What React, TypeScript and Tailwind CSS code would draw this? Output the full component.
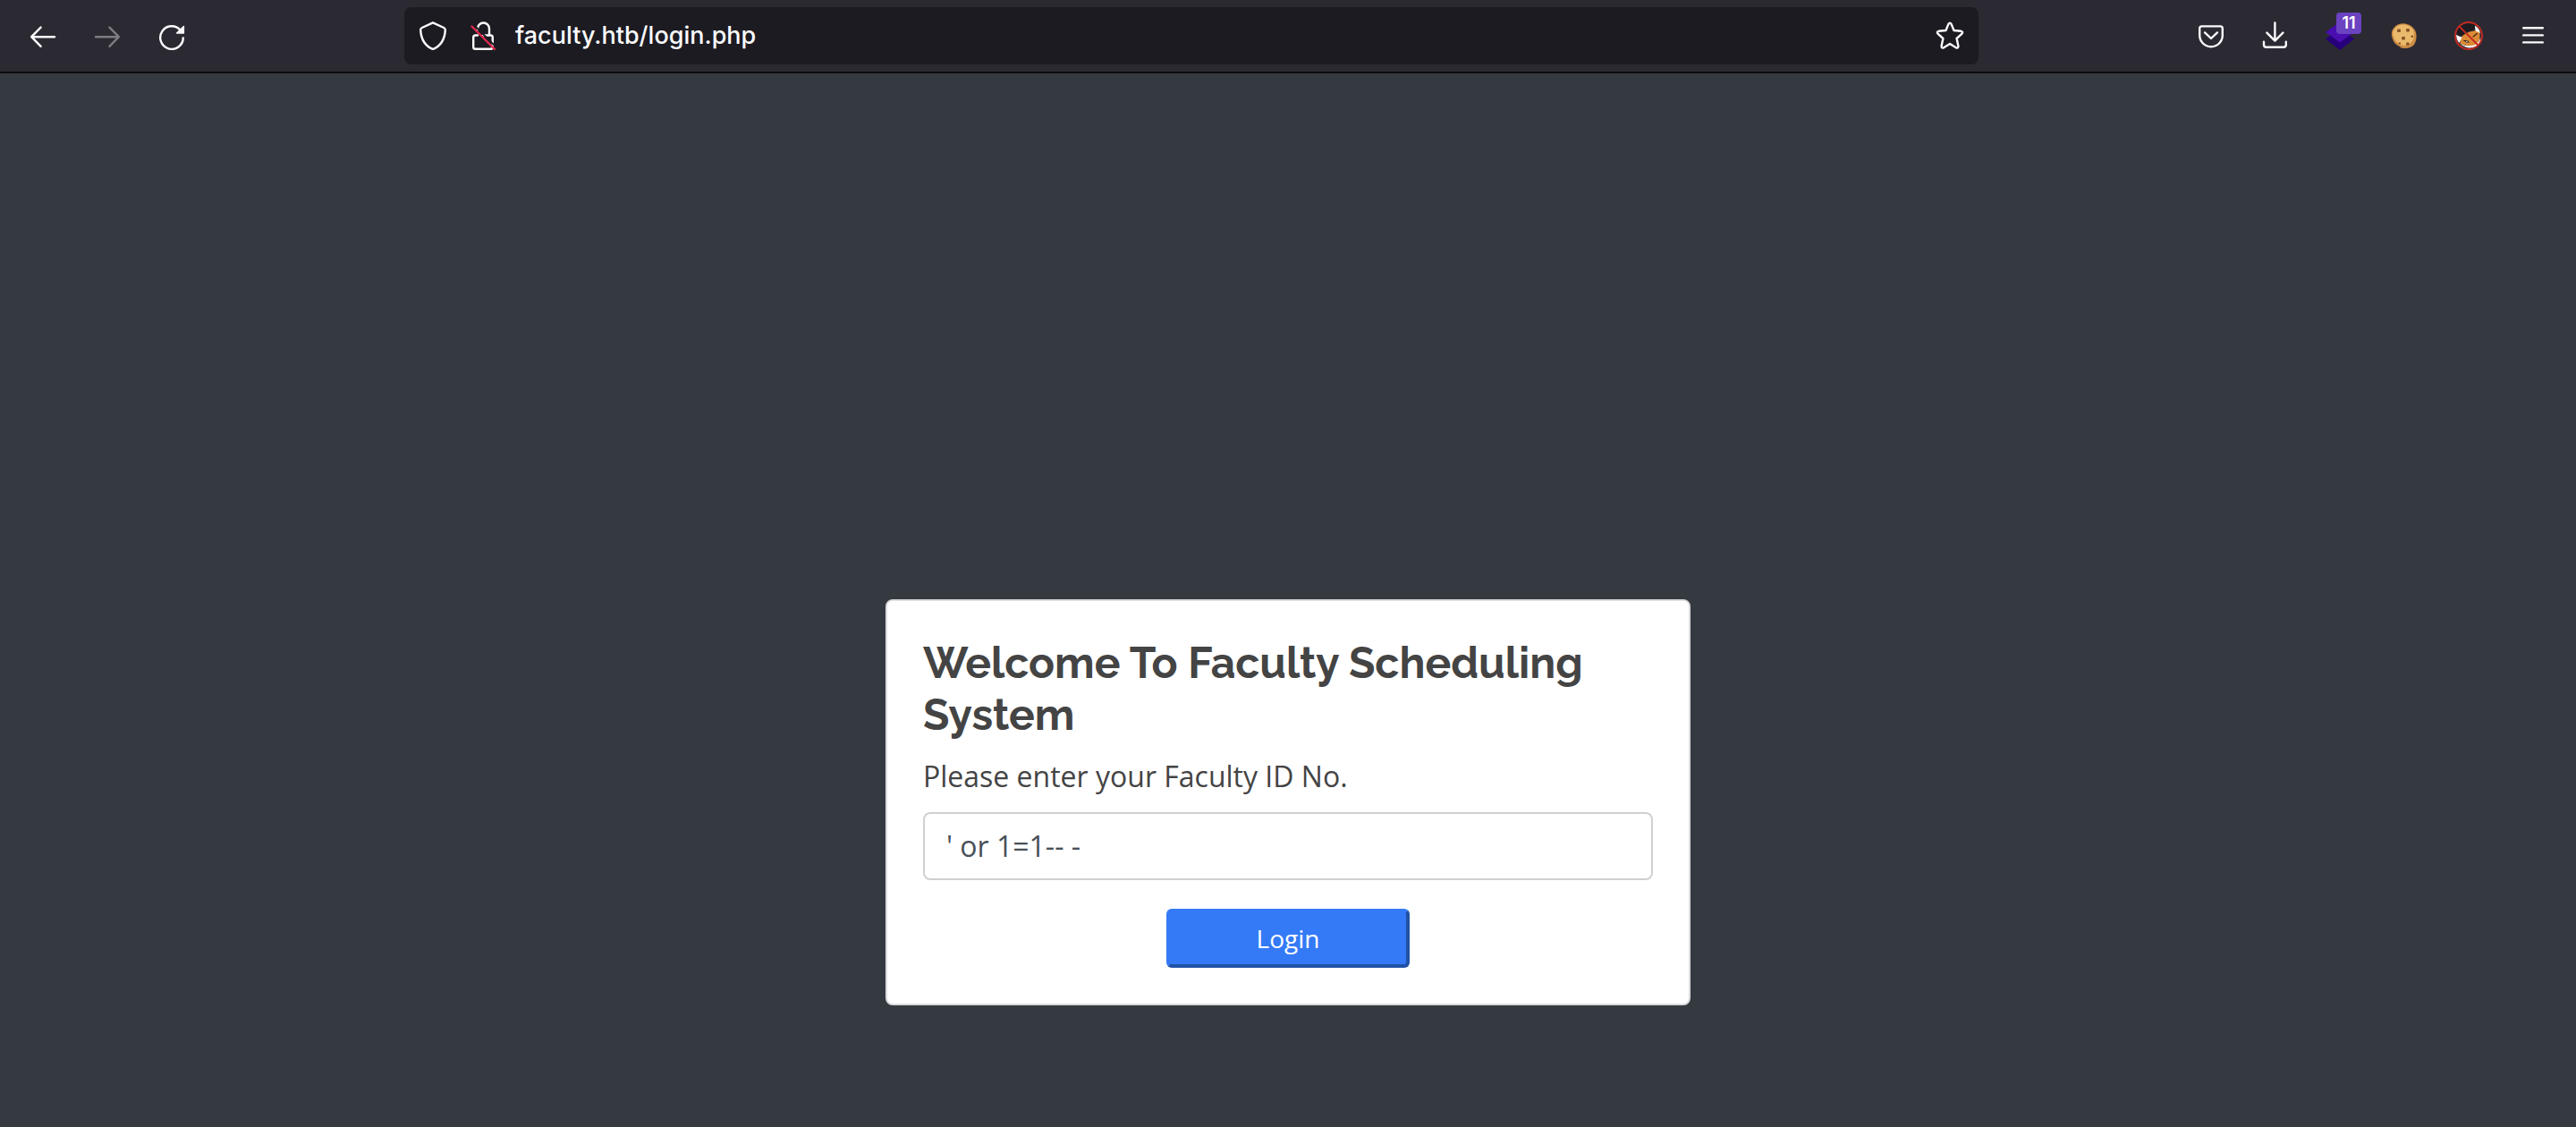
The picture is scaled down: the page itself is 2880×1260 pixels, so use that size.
import { useState, type ReactNode } from 'react';

function Icon({ children }: { children: ReactNode }) {
  return (
    <svg
      aria-hidden="true"
      viewBox="0 0 32 32"
      className="size-8 shrink-0"
      fill="none"
      stroke="currentColor"
      strokeWidth="2.4"
      strokeLinecap="round"
      strokeLinejoin="round"
    >
      {children}
    </svg>
  );
}

function ToolbarButton({
  label,
  disabled,
  children,
}: {
  label: string;
  disabled?: boolean;
  children: ReactNode;
}) {
  return (
    <button
      type="button"
      aria-label={label}
      disabled={disabled}
      className="relative flex h-16 w-[72px] items-center justify-center rounded-lg text-[#fbfbfe] disabled:text-[#7d7c82]"
    >
      {children}
    </button>
  );
}

function AddressBar() {
  const [url, setUrl] = useState('faculty.htb/login.php');
  return (
    <div className="flex h-16 min-w-0 flex-1 items-center rounded-lg bg-[#1c1b22] px-4 text-[#fbfbfe]">
      <button type="button" aria-label="Tracking protection">
        <Icon>
          <path d="M16 1.4 L28.2 7 Q29.9 7.8 29.8 9.6 C29.3 19.5 25.5 27 16 31 C6.5 27 2.7 19.5 2.2 9.6 Q2.1 7.8 3.8 7 Z" />
        </Icon>
      </button>
      <button type="button" aria-label="Connection not secure" className="ml-6">
        <Icon>
          <path d="M10 9 V8 A6.5 6.5 0 0 1 23 8 V15.5 M10 15.5 H7.5 Q5.2 15.5 5.2 17.8 V28.5 Q5.2 30.8 7.5 30.8 H24.5 Q26.8 30.8 26.8 28.5 V17.8 Q26.8 15.5 24.5 15.5 H16" />
          <path d="M5.5 3.5 L31 29" stroke="#1c1b22" strokeWidth="2" strokeLinecap="butt" />
          <path d="M3.5 5.5 L29 31" stroke="#e22850" />
        </Icon>
      </button>
      <input
        aria-label="Address"
        value={url}
        onChange={(e) => setUrl(e.target.value)}
        className="ml-5 min-w-0 flex-1 bg-transparent font-[Inter,sans-serif] text-[27px] leading-10 font-medium outline-none"
      />
      <button type="button" aria-label="Bookmark this page">
        <Icon>
          <path d="M14.4 2.9 Q16 0.6 17.6 2.9 L20.5 10 L28.4 10.8 Q31.3 11.5 29.3 13.9 L23.6 19 L25.4 27.4 Q25.6 30.3 22.9 29.3 L16 25 L9.1 29.3 Q6.4 30.3 6.6 27.4 L8.4 19 L2.7 13.9 Q0.7 11.5 3.6 10.8 L11.5 10 Z" />
        </Icon>
      </button>
    </div>
  );
}

function Toolbar() {
  return (
    <header className="flex items-center border-b-2 border-[#0c0c0d] bg-[#2b2a33] px-3 py-2">
      <nav aria-label="History" className="flex">
        <ToolbarButton label="Back">
          <Icon>
            <path d="M13.6 6.6 L3.2 17.2 L13.6 27.8 M3.2 17.2 H29" />
          </Icon>
        </ToolbarButton>
        <ToolbarButton label="Forward" disabled>
          <Icon>
            <path d="M18.4 6.6 L28.8 17.2 L18.4 27.8 M28.8 17.2 H3" />
          </Icon>
        </ToolbarButton>
        <ToolbarButton label="Reload">
          <Icon>
            <path d="M28.8 18.4 A12.8 12.8 0 1 1 25.6 9.6" />
            <path d="M29.4 5.6 V13 H21.6 Z" fill="currentColor" strokeWidth="1.4" />
          </Icon>
        </ToolbarButton>
      </nav>
      <div className="flex min-w-0 flex-1 px-56">
        <AddressBar />
      </div>
      <div className="flex">
        <ToolbarButton label="Save to Pocket">
          <Icon>
            <path d="M5.6 5.4 H26.4 Q28.8 5.4 28.8 7.8 V15.6 A12.8 12.6 0 0 1 3.2 15.6 V7.8 Q3.2 5.4 5.6 5.4 Z" />
            <path d="M9 12.4 L16 19 L23 12.4" />
          </Icon>
        </ToolbarButton>
        <ToolbarButton label="Downloads">
          <Icon>
            <path d="M15.4 1.4 V21 M6.4 12.6 L15.4 21.6 L24.4 12.6" />
            <path d="M3 22.8 V26 Q3 28.8 5.8 28.8 H25 Q27.8 28.8 27.8 26 V22.8" />
          </Icon>
        </ToolbarButton>
        <ToolbarButton label="Web technologies, 11 found">
          <Icon>
            <path d="M16 8 L32 19.5 L16 32 L0 19.5 Z" fill="#26007a" stroke="none" />
            <path d="M16 0.5 L32 12 L16 23.5 L0 12 Z" fill="#4a0db0" stroke="none" />
          </Icon>
          <span className="absolute top-1.5 right-3 flex h-6 w-7 items-center justify-center rounded-sm bg-[#6b42bf] font-[Inter,sans-serif] text-[18px] leading-6 font-semibold text-white">
            11
          </span>
        </ToolbarButton>
        <ToolbarButton label="Cookie editor">
          <Icon>
            <path
              d="M10 3 Q16 1 22 4 Q29 8 29.5 15 Q30 21 27 26 Q23 30 17 30 Q13 30.5 10 27.5 Q4 25 2.5 18 Q0.5 12 4 7.5 Q6 4 10 3 Z"
              fill="#cf8d45"
              stroke="none"
            />
            <path
              d="M11 4 Q17 2.5 21 5 Q26.5 8 27 14 Q27 20 23.5 24 Q19 28 13.5 26.5 Q6 24 4 17 Q2 12 5.5 8 Q7.5 5 11 4 Z"
              fill="#eab96c"
              stroke="none"
            />
            <g fill="#8a5527" stroke="none">
              <rect x="8" y="8.5" width="4" height="3.6" rx="1" />
              <rect x="18" y="8" width="4" height="3.4" rx="1" />
              <rect x="13" y="17" width="4" height="3.6" rx="1" />
              <rect x="23.5" y="15.5" width="2.6" height="2.6" rx="1" />
              <rect x="18" y="23.5" width="3.6" height="3.2" rx="1" />
              <rect x="9.5" y="23.5" width="2.6" height="2" rx="1" />
            </g>
          </Icon>
        </ToolbarButton>
        <ToolbarButton label="FoxyProxy, disabled">
          <Icon>
            <path
              d="M5 6.5 Q10 1.8 16.5 2 Q22 2.4 24 5 L22 9.5 L14 12 L7.5 17 L3 14 Q3 9 5 6.5 Z"
              fill="#1d1b20"
              stroke="none"
            />
            <path
              d="M7 18 Q13 11.5 22 10.5 L27 9.5 Q29.5 14 28 20 Q26.5 25.5 22 27.5 Q14 27.5 6.5 25 Z"
              fill="#dd8a35"
              stroke="none"
            />
            <path
              d="M2 15 L8.5 17.8 L5.5 24 Q2 20 2 15 Z M23 4.5 Q28 7.5 29 13 L23.5 10.5 Z M6.5 25 Q14 28.5 22.5 26.5 Q26.5 25 29.5 18 Q29.5 25 24 28 Q15 32 6.5 25 Z"
              fill="#fff"
              stroke="none"
            />
            <path d="M11 21.5 Q14 20.5 16.5 23 Q13 24.5 11 21.5 Z" fill="#fff" stroke="#3a2412" strokeWidth="1" />
            <path d="M21 17 L25.5 13.5" stroke="#3a2412" strokeWidth="1.2" />
            <circle cx="16" cy="16" r="15" stroke="#c12a22" strokeWidth="2" />
            <path d="M5.6 5.6 L26.4 26.4" stroke="#c12a22" strokeWidth="2" />
          </Icon>
        </ToolbarButton>
        <ToolbarButton label="Open application menu">
          <Icon>
            <path d="M5.2 7.2 H26.8 M5.2 15.4 H26.8 M5.2 23.4 H26.8" />
          </Icon>
        </ToolbarButton>
      </div>
    </header>
  );
}

function LoginCard() {
  const [id, setId] = useState("' or 1=1-- -");
  return (
    <form
      onSubmit={(e) => e.preventDefault()}
      className="flex w-full max-w-[900px] flex-col rounded-lg border-2 border-[#dcdddf] bg-white p-10 text-[#444444]"
    >
      <h1 className="font-[Raleway,Lato,sans-serif] text-[48px] leading-[58px] font-bold">
        Welcome To Faculty Scheduling System
      </h1>
      <label htmlFor="faculty-id" className="mt-4 text-[32px] leading-12">
        Please enter your Faculty ID No.
      </label>
      <input
        id="faculty-id"
        type="text"
        value={id}
        onChange={(e) => setId(e.target.value)}
        className="mt-4 rounded-lg border-2 border-[#ced0d3] bg-white px-6 py-3 text-[32px] leading-12 text-[#495057] outline-none"
      />
      <button
        type="submit"
        className="mt-8 w-1/3 self-center rounded-md border-4 border-t-[#347af6] border-r-[#2052a6] border-b-[#2052a6] border-l-[#347af6] bg-[#347af6] py-2 text-[28px] leading-[42px] text-white"
      >
        Login
      </button>
    </form>
  );
}

export default function App() {
  return (
    <div className="flex min-h-screen flex-col bg-[#353a40] font-['Open_Sans','Noto_Sans',sans-serif]">
      <Toolbar />
      <main className="flex flex-1 items-start justify-center px-4 pt-[588px] pb-10">
        <LoginCard />
      </main>
    </div>
  );
}
